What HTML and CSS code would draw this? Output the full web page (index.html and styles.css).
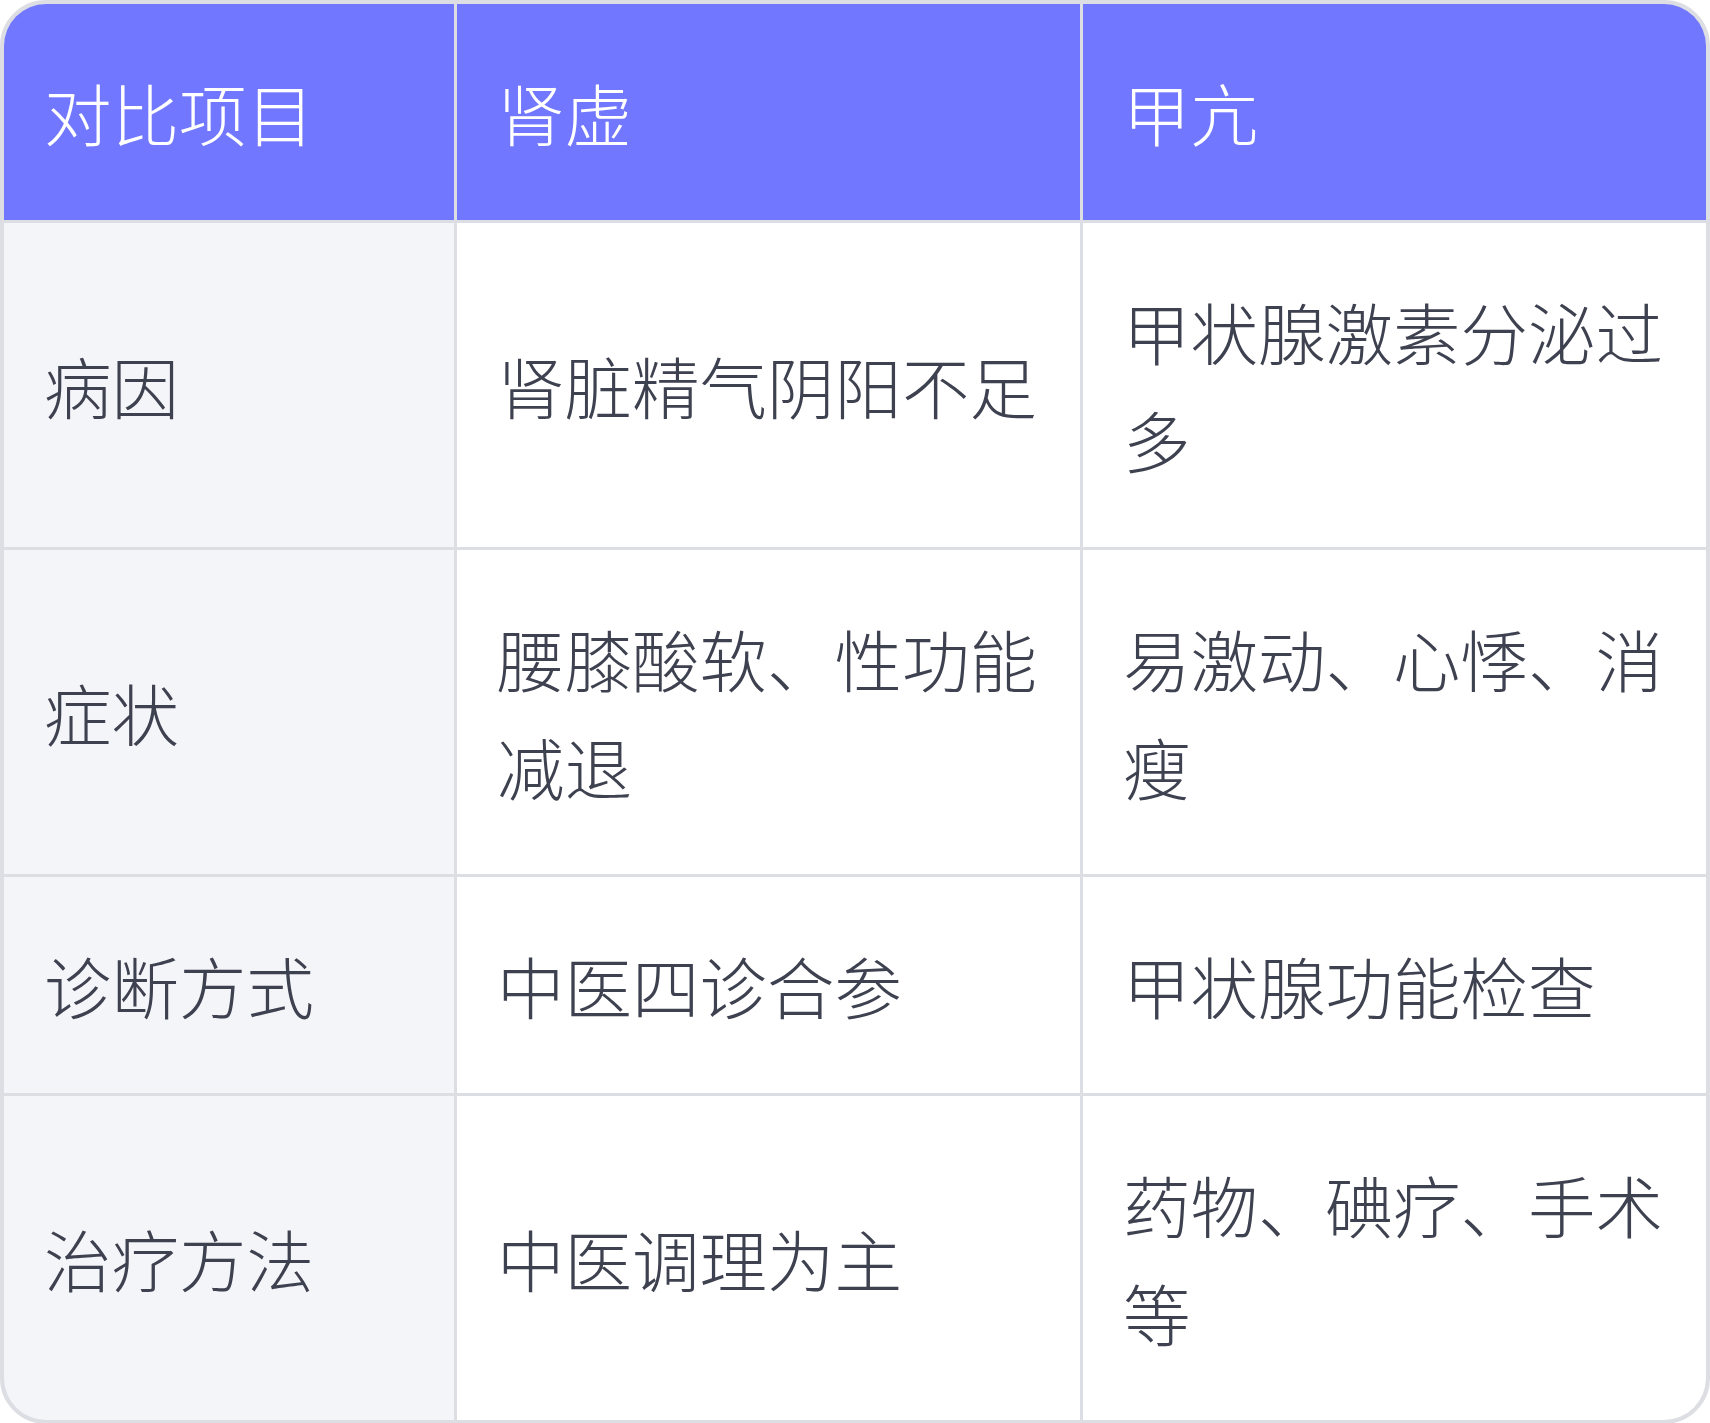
FILE: index.html
```html
<!DOCTYPE html>
<html lang="zh-CN">
<head>
<meta charset="utf-8">
<title>肾虚与甲亢对比</title>
<link rel="stylesheet" href="styles.css">
</head>
<body>
<div class="table">
  <div class="cell head">对比项目</div>
  <div class="cell head">肾虚</div>
  <div class="cell head">甲亢</div>

  <div class="cell label">病因</div>
  <div class="cell">肾脏精气阴阳不足</div>
  <div class="cell">甲状腺激素分泌过多</div>

  <div class="cell label">症状</div>
  <div class="cell">腰膝酸软、性功能减退</div>
  <div class="cell">易激动、心悸、消瘦</div>

  <div class="cell label">诊断方式</div>
  <div class="cell">中医四诊合参</div>
  <div class="cell">甲状腺功能检查</div>

  <div class="cell label">治疗方法</div>
  <div class="cell">中医调理为主</div>
  <div class="cell">药物、碘疗、手术等</div>
</div>
</body>
</html>
```

FILE: styles.css
```css
html, body {
  margin: 0;
  padding: 0;
  background: #ffffff;
}

.table {
  box-sizing: border-box;
  width: 1710px;
  border: 4px solid #dddee3;
  border-radius: 46px;
  overflow: hidden;
  display: grid;
  grid-template-columns: 450px 1fr 1fr;
  gap: 3px;
  background: #dddee3;
  font-family: "Noto Sans CJK SC Light", "Noto Sans CJK SC DemiLight", "Noto Sans CJK SC", "Noto Sans", sans-serif;
  font-weight: 300;
}

.cell {
  display: flex;
  align-items: center;
  padding: 54px 40px;
  font-size: 67.5px;
  line-height: 108px;
  color: #3e414f;
  background: #ffffff;
}

.cell.head {
  background: #7177ff;
  color: #ffffff;
}

.cell.label {
  background: #f4f5f9;
}
```
